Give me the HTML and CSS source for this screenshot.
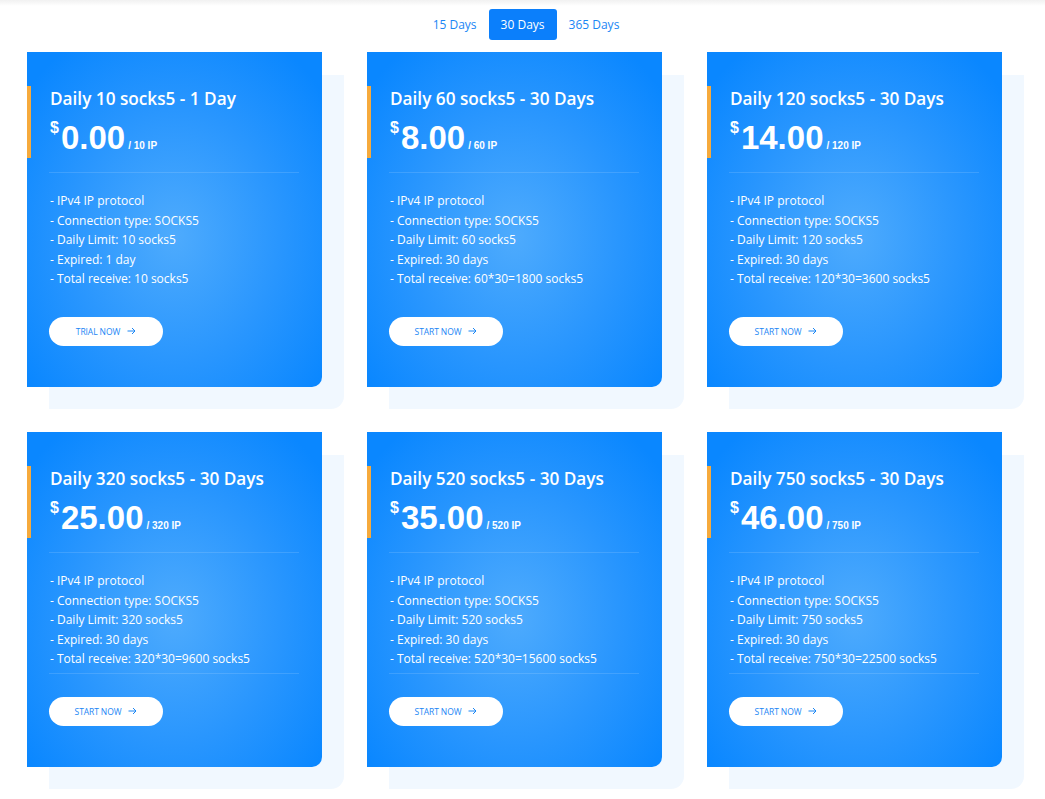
FILE: index.html
```html
<!DOCTYPE html>
<html>
<head>
<meta charset="utf-8">
<link rel="stylesheet" href="styles.css">
</head>
<body>
<div class="topshade"></div>
<div class="page">
  <div class="tabs">
    <a class="tab">15 Days</a>
    <a class="tab active">30 Days</a>
    <a class="tab">365 Days</a>
  </div>
  <div class="grid">
    <div class="plan">
      <div class="card">
        <div class="head">
          <div class="title">Daily 10 socks5 - 1 Day</div>
          <div class="price"><span class="cur">$</span><span class="amt">0.00</span><span class="per">/ 10 IP</span></div>
        </div>
        <div class="divider"></div>
        <ul class="feats">
          <li>- IPv4 IP protocol</li>
          <li>- Connection type: SOCKS5</li>
          <li>- Daily Limit: 10 socks5</li>
          <li>- Expired: 1 day</li>
          <li>- Total receive: 10 socks5</li>
        </ul>
        <a class="btn">TRIAL NOW <svg width="9" height="8" viewBox="0 0 9 8"><path d="M0.5 4H8M5 1l3 3-3 3" fill="none" stroke="currentColor" stroke-width="1"/></svg></a>
      </div>
    </div>
    <div class="plan">
      <div class="card">
        <div class="head">
          <div class="title">Daily 60 socks5 - 30 Days</div>
          <div class="price"><span class="cur">$</span><span class="amt">8.00</span><span class="per">/ 60 IP</span></div>
        </div>
        <div class="divider"></div>
        <ul class="feats">
          <li>- IPv4 IP protocol</li>
          <li>- Connection type: SOCKS5</li>
          <li>- Daily Limit: 60 socks5</li>
          <li>- Expired: 30 days</li>
          <li>- Total receive: 60*30=1800 socks5</li>
        </ul>
        <a class="btn">START NOW <svg width="9" height="8" viewBox="0 0 9 8"><path d="M0.5 4H8M5 1l3 3-3 3" fill="none" stroke="currentColor" stroke-width="1"/></svg></a>
      </div>
    </div>
    <div class="plan">
      <div class="card">
        <div class="head">
          <div class="title">Daily 120 socks5 - 30 Days</div>
          <div class="price"><span class="cur">$</span><span class="amt">14.00</span><span class="per">/ 120 IP</span></div>
        </div>
        <div class="divider"></div>
        <ul class="feats">
          <li>- IPv4 IP protocol</li>
          <li>- Connection type: SOCKS5</li>
          <li>- Daily Limit: 120 socks5</li>
          <li>- Expired: 30 days</li>
          <li>- Total receive: 120*30=3600 socks5</li>
        </ul>
        <a class="btn">START NOW <svg width="9" height="8" viewBox="0 0 9 8"><path d="M0.5 4H8M5 1l3 3-3 3" fill="none" stroke="currentColor" stroke-width="1"/></svg></a>
      </div>
    </div>
    <div class="plan">
      <div class="card">
        <div class="head">
          <div class="title">Daily 320 socks5 - 30 Days</div>
          <div class="price"><span class="cur">$</span><span class="amt">25.00</span><span class="per">/ 320 IP</span></div>
        </div>
        <div class="divider"></div>
        <ul class="feats">
          <li>- IPv4 IP protocol</li>
          <li>- Connection type: SOCKS5</li>
          <li>- Daily Limit: 320 socks5</li>
          <li>- Expired: 30 days</li>
          <li>- Total receive: 320*30=9600 socks5</li>
        </ul>
        <div class="divider low"></div>
        <a class="btn">START NOW <svg width="9" height="8" viewBox="0 0 9 8"><path d="M0.5 4H8M5 1l3 3-3 3" fill="none" stroke="currentColor" stroke-width="1"/></svg></a>
      </div>
    </div>
    <div class="plan">
      <div class="card">
        <div class="head">
          <div class="title">Daily 520 socks5 - 30 Days</div>
          <div class="price"><span class="cur">$</span><span class="amt">35.00</span><span class="per">/ 520 IP</span></div>
        </div>
        <div class="divider"></div>
        <ul class="feats">
          <li>- IPv4 IP protocol</li>
          <li>- Connection type: SOCKS5</li>
          <li>- Daily Limit: 520 socks5</li>
          <li>- Expired: 30 days</li>
          <li>- Total receive: 520*30=15600 socks5</li>
        </ul>
        <div class="divider low"></div>
        <a class="btn">START NOW <svg width="9" height="8" viewBox="0 0 9 8"><path d="M0.5 4H8M5 1l3 3-3 3" fill="none" stroke="currentColor" stroke-width="1"/></svg></a>
      </div>
    </div>
    <div class="plan">
      <div class="card">
        <div class="head">
          <div class="title">Daily 750 socks5 - 30 Days</div>
          <div class="price"><span class="cur">$</span><span class="amt">46.00</span><span class="per">/ 750 IP</span></div>
        </div>
        <div class="divider"></div>
        <ul class="feats">
          <li>- IPv4 IP protocol</li>
          <li>- Connection type: SOCKS5</li>
          <li>- Daily Limit: 750 socks5</li>
          <li>- Expired: 30 days</li>
          <li>- Total receive: 750*30=22500 socks5</li>
        </ul>
        <div class="divider low"></div>
        <a class="btn">START NOW <svg width="9" height="8" viewBox="0 0 9 8"><path d="M0.5 4H8M5 1l3 3-3 3" fill="none" stroke="currentColor" stroke-width="1"/></svg></a>
      </div>
    </div>
  </div>
</div>
</body>
</html>
```
FILE: styles.css
```css
html, body {
  margin: 0;
  padding: 0;
  background: #ffffff;
  font-family: "Open Sans", "Noto Sans", sans-serif;
}
.topshade {
  position: absolute;
  left: 0;
  top: 0;
  right: 0;
  height: 6px;
  background: linear-gradient(#f1f1f1, rgba(255,255,255,0));
}
.page {
  width: 1045px;
  height: 799px;
  overflow: hidden;
}
.tabs {
  display: flex;
  justify-content: center;
  gap: 12px;
  padding-top: 9px;
  padding-left: 7px;
}
.tab {
  display: block;
  height: 31px;
  line-height: 31px;
  font-size: 12px;
  color: #1a86f5;
  border-radius: 3px;
}
.tab.active {
  background: #0b7ffb;
  color: #ffffff;
  padding: 0 12px;
}
.grid {
  display: grid;
  grid-template-columns: repeat(3, 295px);
  column-gap: 45px;
  row-gap: 45px;
  padding-left: 27px;
  margin-top: 12px;
}
.plan {
  position: relative;
  height: 335px;
}
.plan::before {
  content: "";
  position: absolute;
  left: 22px;
  top: 23px;
  width: 295px;
  height: 334px;
  background: #f1f8ff;
  border-bottom-right-radius: 13px;
}
.card {
  position: relative;
  height: 335px;
  box-sizing: border-box;
  padding-top: 34px;
  background: radial-gradient(ellipse 190px 230px at 50% 55%, #4eabfd 0%, #2996fe 55%, #0a87ff 100%);
  border-bottom-right-radius: 10px;
  color: #ffffff;
}
.head {
  height: 72px;
  box-sizing: border-box;
  border-left: 4px solid #f6aa3c;
  padding-left: 19px;
  padding-top: 1px;
}
.title {
  font-size: 17.2px;
  font-weight: 600;
  line-height: 24px;
}
.price {
  display: flex;
  align-items: baseline;
  font-family: "Liberation Sans", Arial, sans-serif;
  font-weight: 700;
  margin-top: 10px;
}
.cur {
  font-size: 16px;
  align-self: flex-start;
  margin-top: -2px;
  margin-right: 2px;
}
.amt {
  font-size: 33px;
  line-height: 33px;
}
.per {
  font-size: 10px;
  margin-left: 3px;
}
.divider {
  height: 1px;
  margin: 14px 23px 0 22px;
  background: rgba(255,255,255,0.13);
}
.divider.low {
  margin-top: 4px;
}
.feats {
  list-style: none;
  margin: 18px 0 0 0;
  padding: 0 0 0 23px;
  font-size: 12px;
  line-height: 19.5px;
}
.btn {
  display: flex;
  align-items: center;
  justify-content: center;
  gap: 7px;
  width: 114px;
  height: 29px;
  margin: 28px 0 0 22px;
  background: #ffffff;
  border-radius: 15px;
  color: #1a86f5;
  font-size: 8.5px;
  letter-spacing: -0.1px;
}
.card .divider.low + .btn {
  margin-top: 23px;
}
```
